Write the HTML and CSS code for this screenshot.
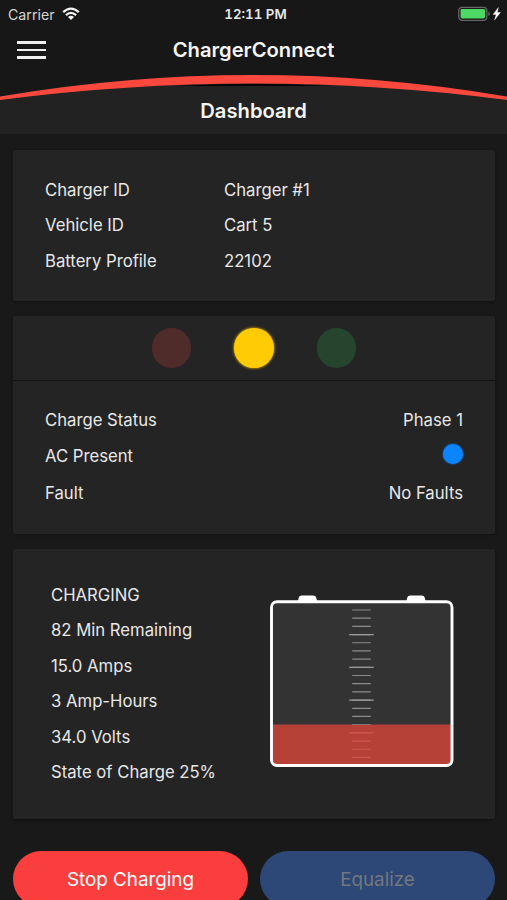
FILE: index.html
```html
<!DOCTYPE html>
<html lang="en">
<head>
    <meta charset="UTF-8">
    <meta name="viewport" content="width=device-width, initial-scale=1.0">
    <title>ChargerConnect</title>

    <link rel="stylesheet" href="styles.css">

</head>
<body>
    <div class="statusbar">
        <div class="carrier">
            <span>Carrier</span>
            <svg class="wifi" width="18" height="14" viewBox="0 0 18 14">
                <path d="M1.2 5.2 Q9 -2 16.8 5.2" fill="none" stroke="#f4f4f4" stroke-width="2.3"/>
                <path d="M3.9 8.1 Q9 3.5 14.1 8.1" fill="none" stroke="#f4f4f4" stroke-width="2.2"/>
                <path d="M6 10 Q9 7.5 12 10 L9 13 Z" fill="#f4f4f4"/>
            </svg>
        </div>
        <div class="clock">12:11 PM</div>
        <div class="power">
            <svg width="43" height="16" viewBox="0 0 43 16">
                <rect x="0.8" y="1.3" width="28" height="13" rx="3.4" fill="#171717" stroke="#666" stroke-width="1.3"/>
                <rect x="2.6" y="3.1" width="24.4" height="9.4" rx="1.4" fill="#4cd964"/>
                <path d="M30.3 5.6 Q32 6.4 32 7.8 Q32 9.2 30.3 10 Z" fill="#666"/>
                <path d="M40.3 1.6 L35.2 8.4 H38.2 L36.6 13.9 L42.4 6.5 H39.3 Z" fill="#fff" stroke="#fff" stroke-width="0.4"/>
            </svg>
        </div>
    </div>

    <div class="navbar">
        <div class="menu">
            <span></span>
            <span></span>
            <span></span>
        </div>
        <h1>ChargerConnect</h1>
    </div>

    <div class="header">
        <svg class="arc" width="507" height="62" viewBox="0 0 507 62">
            <path d="M0 26 Q253.5 -6 507 26 V62 H0 Z" fill="#222"/>
            <path d="M175 14 Q253.5 10 332 14 Q253.5 14 175 14 Z" fill="#000"/>
            <path d="M0 24.5 Q253.5 -18.5 507 24.5 V28 Q253.5 -5 0 28 Z" fill="#f9483e"/>
        </svg>
        <h2>Dashboard</h2>
    </div>

    <div class="content">
        <div class="card info">
            <div class="row"><span class="label">Charger ID</span><span>Charger #1</span></div>
            <div class="row"><span class="label">Vehicle ID</span><span>Cart 5</span></div>
            <div class="row"><span class="label">Battery Profile</span><span>22102</span></div>
        </div>

        <div class="card status">
            <div class="lights">
                <span class="light red"></span>
                <span class="light yellow"></span>
                <span class="light green"></span>
            </div>
            <div class="rows">
                <div class="row"><span>Charge Status</span><span>Phase 1</span></div>
                <div class="row ac"><span>AC Present</span><span class="dot"></span></div>
                <div class="row"><span>Fault</span><span>No Faults</span></div>
            </div>
        </div>

        <div class="card charging">
            <div class="stats">
                <div class="row">CHARGING</div>
                <div class="row">82 Min Remaining</div>
                <div class="row">15.0 Amps</div>
                <div class="row">3 Amp-Hours</div>
                <div class="row">34.0 Volts</div>
                <div class="row">State of Charge 25%</div>
            </div>
            <svg class="battery" width="184" height="173" viewBox="0 0 184 173">
                <path d="M28 6 L28.6 3 Q29 0.5 31.5 0.5 H43.5 Q46 0.5 46.4 3 L47 6 Z" fill="#fff"/>
                <path d="M136.5 6 L137.1 3 Q137.5 0.5 140 0.5 H152 Q154.5 0.5 154.9 3 L155.5 6 Z" fill="#fff"/>
                <rect x="1.5" y="6.7" width="180.5" height="163.8" rx="5.5" fill="#333"/>
                <path d="M2 129.5 H182 V165 Q182 170.5 176.5 170.5 H7.5 Q2 170.5 2 165 Z" fill="#b64137"/>
                <!-- short marks, then every fourth one longer -->
                <path d="M91.5 14.4 V129.8" stroke="#8c8c8c" stroke-width="18.6" stroke-dasharray="1.2 6.99"/>
                <path d="M91.5 38.97 V129" stroke="#9a9a9a" stroke-width="24.6" stroke-dasharray="1.2 31.56"/>
                <path d="M91.5 137.25 V163.5" stroke="#cb574e" stroke-width="18.6" stroke-dasharray="1.2 6.99"/>
                <path d="M91.5 137.25 V138.45" stroke="#cb574e" stroke-width="24.6"/>
                <rect x="1.5" y="6.7" width="180.5" height="163.8" rx="5.5" fill="none" stroke="#fff" stroke-width="2.9"/>
            </svg>
        </div>

        <div class="buttons">
            <button class="stop">Stop Charging</button>
            <button class="equalize" disabled>Equalize</button>
        </div>
    </div>
</body>
</html>
```
FILE: styles.css
```css
* {
    box-sizing: border-box;
}

body {
    margin: 0;
    width: 507px;
    height: 900px;
    overflow: hidden;
    background-color: #191919;
    color: #e8e8e8;
    font-family: Inter, "Liberation Sans", sans-serif;
    font-size: 16.7px;
}

h1,
h2 {
    margin: 0;
    color: #f5f5f5;
    font-size: 20.2px;
    font-weight: 600;
    line-height: 26px;
    text-align: center;
}

.statusbar {
    display: grid;
    grid-template-columns: 1fr auto 1fr;
    align-items: center;
    height: 28px;
    padding: 0 6px 0 8px;
    background-color: #171717;
    font-size: 14.2px;
}

.carrier {
    display: flex;
    align-items: center;
    gap: 7px;
    height: 26px;
    color: #d4d4d4;
}

.clock {
    padding-left: 2px;
    font-size: 13.3px;
    font-weight: 600;
    font-variant-numeric: tabular-nums;
}

.power {
    display: flex;
    justify-content: flex-end;
}

.navbar {
    display: grid;
    grid-template-columns: 29px 1fr 29px;
    align-items: center;
    height: 44px;
    padding: 0 17px;
    background-color: #171717;
}

.menu {
    display: flex;
    flex-direction: column;
    gap: 5px;
}

.menu span {
    height: 2.4px;
    background-color: #efefef;
}

.header {
    display: grid;
    height: 62px;
    background-color: #171717;
}

.arc,
.header h2 {
    grid-area: 1 / 1;
}

.header h2 {
    padding-top: 26px;
}

.content {
    display: flex;
    flex-direction: column;
    gap: 15px;
    padding: 16px 12px 0 13px;
}

.card {
    background-color: #242424;
    border-radius: 2px;
    box-shadow: 0 1px 2px #121212;
}

.row {
    display: flex;
    justify-content: space-between;
    align-items: center;
    height: 35.5px;
}

.info {
    height: 151px;
    padding: 22px 32px;
}

.info .row {
    justify-content: flex-start;
}

.label {
    width: 179px;
}

.status {
    height: 218px;
}

.lights {
    display: flex;
    justify-content: center;
    align-items: center;
    gap: 43px;
    height: 65px;
    border-bottom: 1.5px solid #131313;
}

.light {
    width: 39.5px;
    height: 39.5px;
    border-radius: 50%;
}

.red {
    background-color: #4f2c2a;
}

.yellow {
    background-color: #ffcb05;
    box-shadow: 0 0 3px #ffcb05;
}

.green {
    background-color: #26452f;
}

.rows {
    padding: 21.5px 32px;
}

.ac {
    height: 35.5px;
    margin-bottom: 2px;
}

.dot {
    width: 20px;
    height: 20px;
    margin-top: -3px;
    border-radius: 50%;
    background-color: #0a84ff;
    box-shadow: 0 0 2px #0a84ff;
}

.charging {
    display: flex;
    justify-content: space-between;
    height: 270px;
    padding: 28px 41px 0 38px;
}

.battery {
    margin-top: 18px;
}

.buttons {
    display: grid;
    grid-template-columns: 1fr 1fr;
    gap: 12px;
    margin-top: 17px;
}

button {
    height: 56px;
    border: none;
    border-radius: 28px;
    padding: 0;
    color: #ffffff;
    font-family: inherit;
    font-size: 18.8px;
}

.stop {
    background-color: #fa3e3e;
}

.equalize {
    background-color: #2d4776;
    color: #737780;
}
```
